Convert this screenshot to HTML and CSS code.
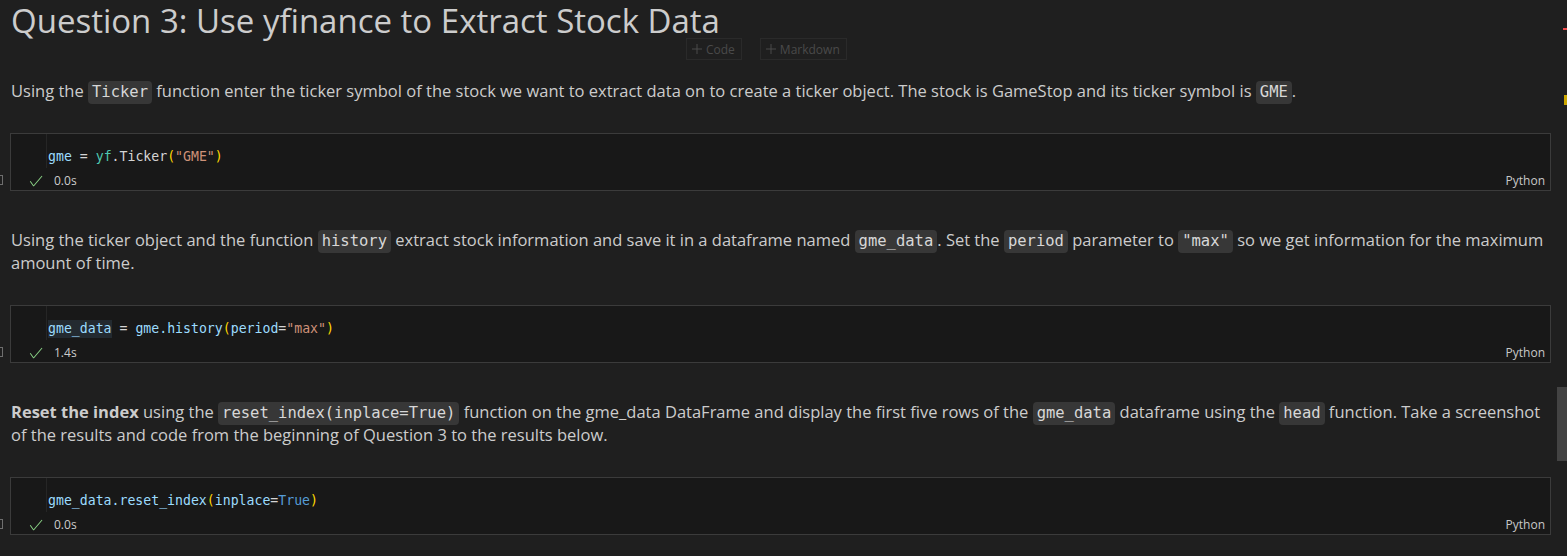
FILE: index.html
```html
<!DOCTYPE html>
<html lang="en">
<head>
<meta charset="utf-8">
<title>Question 3: Use yfinance to Extract Stock Data</title>
<link rel="stylesheet" href="styles.css">
</head>
<body>
<div class="notebook">
  <section class="md first">
    <h1 class="title">Question 3: Use yfinance to Extract Stock Data</h1>
    <p class="text">Using the <code class="ic">Ticker</code> function enter the ticker symbol of the stock we want to extract data on to create a ticker object. The stock is GameStop and its ticker symbol is <code class="ic">GME</code>.</p>
  </section>

  <div class="insert-bar">
    <span class="insert-btn"><svg class="plus" viewBox="0 0 12 12" width="12" height="12"><path d="M6 1v10M1 6h10" stroke="currentColor" stroke-width="1" fill="none"/></svg>Code</span>
    <span class="insert-btn"><svg class="plus" viewBox="0 0 12 12" width="12" height="12"><path d="M6 1v10M1 6h10" stroke="currentColor" stroke-width="1" fill="none"/></svg>Markdown</span>
  </div>

  <div class="code-row">
    <div class="gutter"><span class="fold"></span></div>
    <div class="cell">
      <div class="editor"><span class="v">gme</span> <span class="op">=</span> <span class="mod">yf</span><span class="op">.Ticker</span><span class="br">(</span><span class="str">"GME"</span><span class="br">)</span></div>
      <div class="status">
        <svg class="check" viewBox="0 0 16 16" width="16" height="16"><path d="M14.431 3.323l-8.47 10-.79-.036-3.35-4.77.818-.574 2.978 4.24 8.051-9.506.764.646z" fill="#89d185"/></svg>
        <span class="time">0.0s</span>
        <span class="lang">Python</span>
      </div>
    </div>
  </div>

  <section class="md">
    <p class="text">Using the ticker object and the function <code class="ic">history</code> extract stock information and save it in a dataframe named <code class="ic">gme_data</code>. Set the <code class="ic">period</code> parameter to <code class="ic">"max"</code> so we get information for the maximum amount of time.</p>
  </section>

  <div class="code-row">
    <div class="gutter"><span class="fold"></span></div>
    <div class="cell">
      <div class="editor"><span class="v hl">gme_data</span> <span class="op">=</span> <span class="v">gme.history</span><span class="br">(</span><span class="v">period</span><span class="op">=</span><span class="str">"max"</span><span class="br">)</span></div>
      <div class="status">
        <svg class="check" viewBox="0 0 16 16" width="16" height="16"><path d="M14.431 3.323l-8.47 10-.79-.036-3.35-4.77.818-.574 2.978 4.24 8.051-9.506.764.646z" fill="#89d185"/></svg>
        <span class="time">1.4s</span>
        <span class="lang">Python</span>
      </div>
    </div>
  </div>

  <section class="md">
    <p class="text"><strong>Reset the index</strong> using the <code class="ic">reset_index(inplace=True)</code> function on the gme_data DataFrame and display the first five rows of the <code class="ic">gme_data</code> dataframe using the <code class="ic">head</code> function. Take a screenshot of the results and code from the beginning of Question 3 to the results below.</p>
  </section>

  <div class="code-row">
    <div class="gutter"><span class="fold"></span></div>
    <div class="cell">
      <div class="editor"><span class="v">gme_data.reset_index</span><span class="br">(</span><span class="v">inplace</span><span class="op">=</span><span class="kw">True</span><span class="br">)</span></div>
      <div class="status">
        <svg class="check" viewBox="0 0 16 16" width="16" height="16"><path d="M14.431 3.323l-8.47 10-.79-.036-3.35-4.77.818-.574 2.978 4.24 8.051-9.506.764.646z" fill="#89d185"/></svg>
        <span class="time">0.0s</span>
        <span class="lang">Python</span>
      </div>
    </div>
  </div>
</div>

<div class="ruler-red"></div>
<div class="ruler-yellow"></div>
<div class="scroll-thumb"></div>
</body>
</html>
```

FILE: styles.css
```css
html, body {
  margin: 0;
  padding: 0;
  background: #1f1f1f;
  height: 100%;
  overflow: hidden;
}

body {
  position: relative;
  font-family: "Open Sans", "Noto Sans", sans-serif;
  color: #cccccc;
}

.notebook {
  position: relative;
  padding: 0 16px 0 0;
}

.md {
  padding: 37px 0 31px 11px;
}

.md.first {
  padding-top: 0;
}

.title {
  margin: 0 0 38px;
  font-size: 33px;
  line-height: 41px;
  font-weight: 400;
  color: #cccccc;
}

.text {
  margin: 0;
  font-size: 16.5px;
  line-height: 23px;
}

.text strong {
  font-weight: 700;
}

.ic {
  font-family: "DejaVu Sans Mono", "Liberation Mono", monospace;
  font-size: 15.5px;
  line-height: 1;
  background: #373737;
  color: #d7d7d7;
  padding: 2px 4px 3px;
  border-radius: 4px;
}

.insert-bar {
  position: absolute;
  top: 38px;
  left: 686px;
  display: flex;
  gap: 18px;
}

.insert-btn {
  display: flex;
  align-items: center;
  gap: 3px;
  height: 20px;
  padding: 0 6px 0 4px;
  border: 1px solid #2a2a2a;
  font-size: 12px;
  color: #4a4a4a;
}

.plus {
  display: block;
}

.code-row {
  display: flex;
}

.gutter {
  width: 10px;
  flex: none;
  display: flex;
  align-items: flex-end;
  padding-bottom: 6px;
  box-sizing: border-box;
}

.fold {
  width: 2px;
  height: 8px;
  border: 1px solid #6e6e6e;
  border-left: none;
}

.cell {
  flex: 1;
  height: 58px;
  box-sizing: border-box;
  border: 1px solid #3b3b3b;
  background: #181818;
  display: flex;
  flex-direction: column;
}

.editor {
  margin-left: 35px;
  padding: 13px 0 2px 1px;
  border-left: 1px solid #262626;
  height: 34px;
  box-sizing: border-box;
  font-family: "DejaVu Sans Mono", "Liberation Mono", monospace;
  font-size: 13.2px;
  line-height: 19px;
  color: #d4d4d4;
  white-space: pre;
}

.v { color: #9cdcfe; }
.op { color: #d4d4d4; }
.mod { color: #4ec9b0; }
.br { color: #ffd700; }
.str { color: #ce9178; }
.kw { color: #569cd6; }
.hl { background: #232a30; padding: 1px 0 2px; }

.status {
  display: flex;
  align-items: center;
  height: 22px;
  padding: 3px 5px 0 17px;
  box-sizing: border-box;
  font-size: 12px;
  line-height: 18px;
}

.check {
  display: block;
  flex: none;
}

.time {
  margin-left: 10px;
  color: #cccccc;
}

.lang {
  margin-left: auto;
  color: #c8c8c8;
}

.ruler-red {
  position: absolute;
  top: 28px;
  right: 0;
  width: 4px;
  height: 2px;
  background: #f14c4c;
}

.ruler-yellow {
  position: absolute;
  top: 95px;
  right: 0;
  width: 3px;
  height: 10px;
  background: #cca700;
}

.scroll-thumb {
  position: absolute;
  top: 387px;
  right: 0;
  width: 10px;
  height: 74px;
  background: #434343;
}
```
